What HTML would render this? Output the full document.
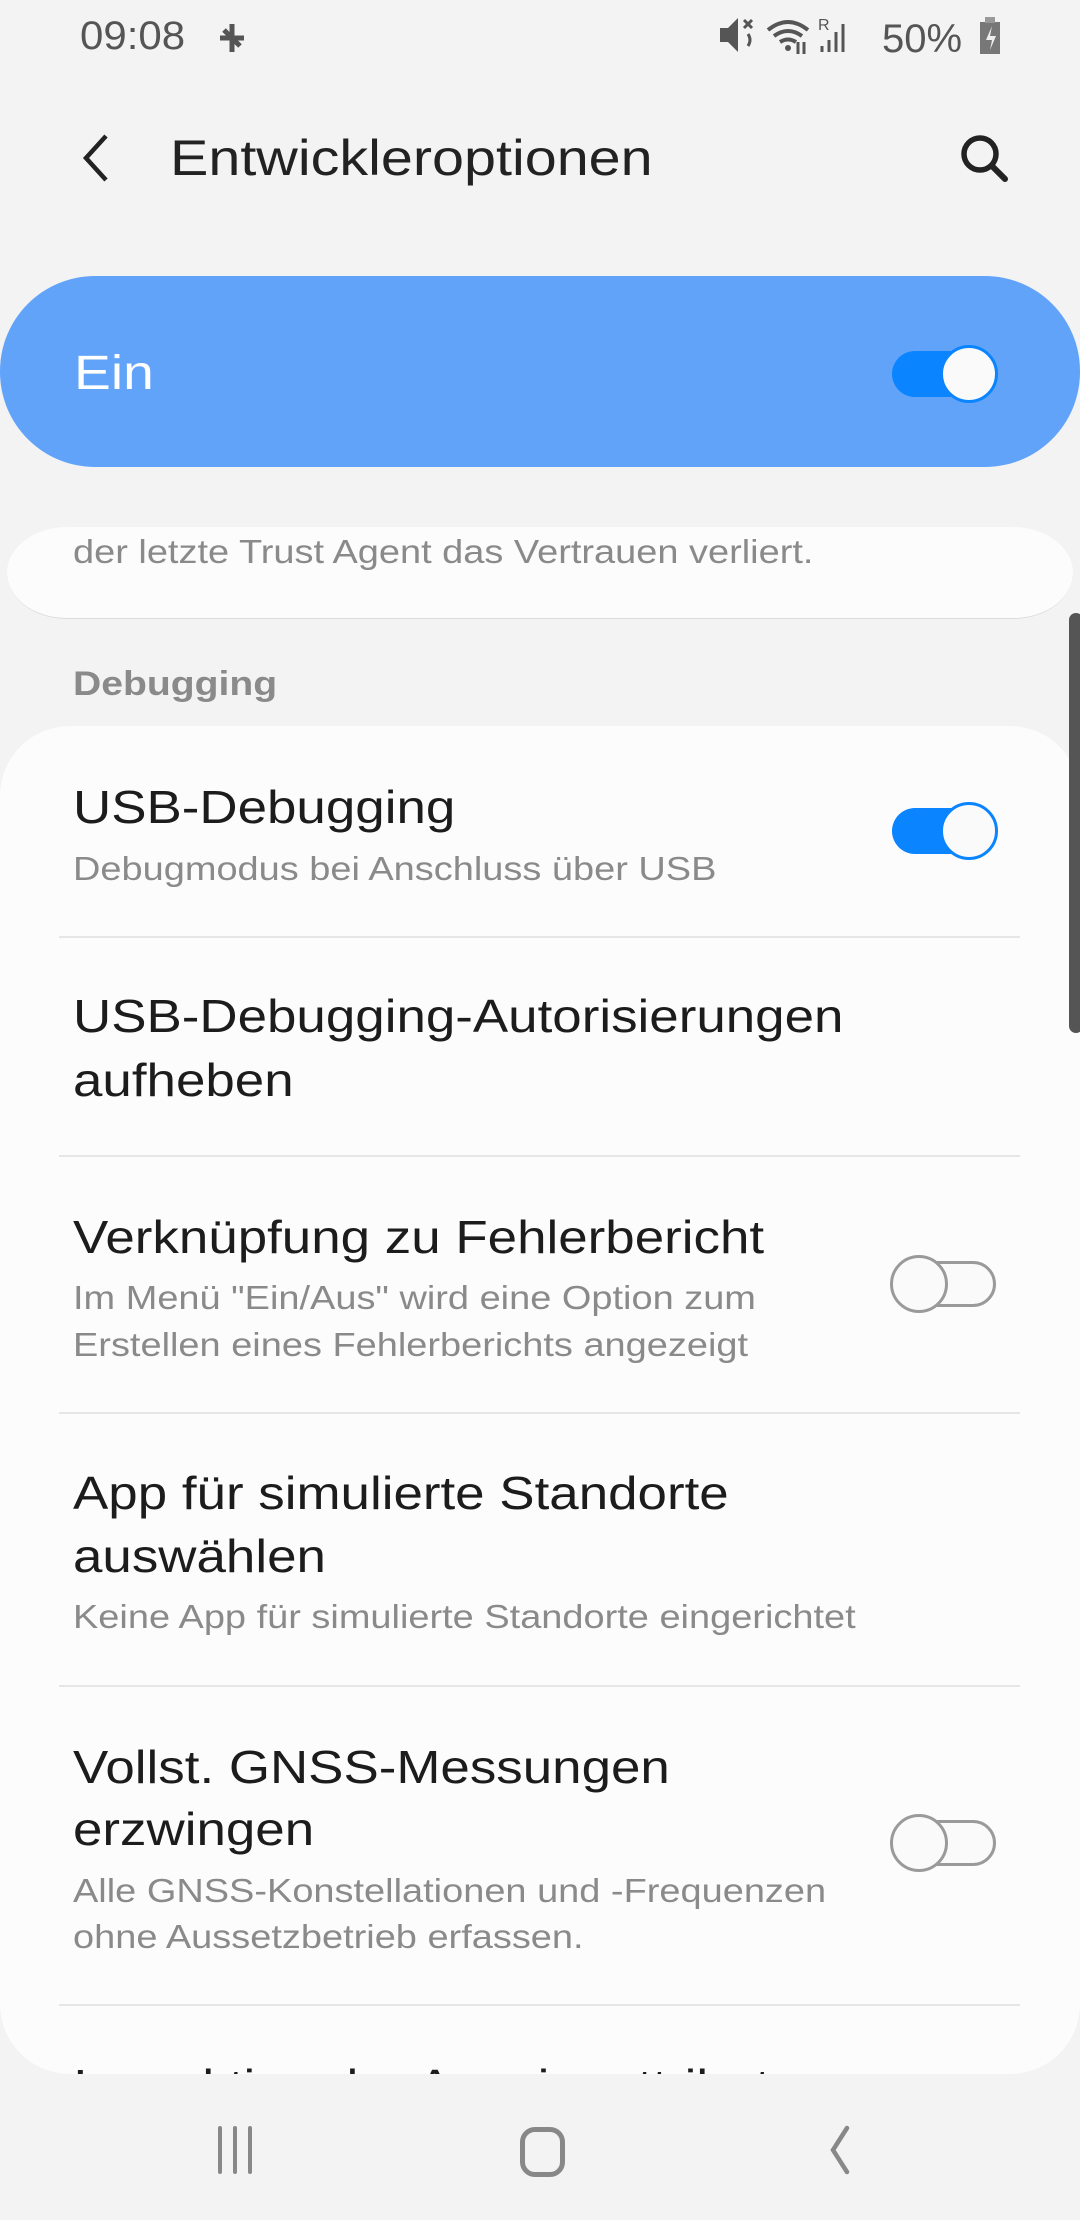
<!DOCTYPE html>
<html><head><meta charset="utf-8"><style>
*{margin:0;padding:0;box-sizing:border-box}
body{width:1080px;height:2220px;background:#f3f3f3;position:relative;overflow:hidden;font-family:"Liberation Sans",sans-serif}
.t{position:absolute;white-space:nowrap;line-height:60px;height:60px;transform:scaleX(1.15);transform-origin:0 50%}
.title{font-size:46px;color:#1c1c1c}
.sub{font-size:33px;color:#8a8a8a}
.div{position:absolute;left:59px;width:961px;height:2px;background:#e6e6e6}
.tog{position:absolute;width:108px;height:56px}
.tog .tr{position:absolute;left:2px;top:5px;width:104px;height:46px;border-radius:23px;background:#0a84ff}
.tog .th{position:absolute;right:0;top:0;width:58px;height:58px;border-radius:50%;background:#fafafa;border:3px solid #0a84ff;top:-1px}
.off .tr{background:#fafafa;border:3px solid #9a9a9a}
.off .th{left:0;right:auto;border-color:#9a9a9a}
</style></head><body>
<div class="t" style="left:80px;top:6px;font-size:40px;color:#555;transform:scaleX(1.05)">09:08</div>
<svg style="position:absolute;left:214px;top:20px" width="36" height="36" viewBox="0 0 36 36"><path d="M18 4v14H6M18 32V18h12M18 18l-8-8M18 18l8 8" stroke="#555" stroke-width="5" fill="none"/></svg>
<svg style="position:absolute;left:718px;top:14px" width="286" height="44" viewBox="0 0 286 44">
<path d="M2 14h8l10-10v34L10 28H2z" fill="#555"/><path d="M26 6l8 8M34 6l-8 8" stroke="#555" stroke-width="3"/><path d="M30 20q4 6 0 12" stroke="#555" stroke-width="3" fill="none"/>
<path d="M50 16q20-16 40 0M56 22q14-10 28 0M62 28q8-5 16 0" stroke="#555" stroke-width="4" fill="none"/><circle cx="70" cy="34" r="3" fill="#555"/><path d="M80 28v12M86 28v12" stroke="#555" stroke-width="3"/>
<text x="100" y="16" font-size="16" fill="#555" font-family="Liberation Sans">R</text>
<path d="M104 38v-6M111 38v-12M118 38v-20M125 38v-28" stroke="#555" stroke-width="3"/>
<text x="164" y="38" font-size="40" fill="#555" font-family="Liberation Sans">50%</text>
<rect x="262" y="8" width="20" height="32" fill="#777"/><rect x="267" y="3" width="10" height="6" fill="#999"/><path d="M274 12l-6 14h6l-2 10 6-14h-6z" fill="#eee"/>
</svg>
<svg style="position:absolute;left:76px;top:132px" width="40" height="52" viewBox="0 0 40 52"><path d="M30 4L10 26l20 22" stroke="#222" stroke-width="4.5" fill="none"/></svg>
<div class="t" style="left:170px;top:128px;font-size:50px;color:#222">Entwickleroptionen</div>
<svg style="position:absolute;left:955px;top:130px" width="60" height="56" viewBox="0 0 60 56"><circle cx="25" cy="24" r="16" stroke="#222" stroke-width="5.5" fill="none"/><path d="M37 36l13 13" stroke="#222" stroke-width="6" stroke-linecap="round"/></svg>
<div style="position:absolute;left:0;top:276px;width:1080px;height:191px;border-radius:95px;background:#62a3fa"></div>
<div class="t" style="left:74px;top:344px;font-size:48px;color:#fff">Ein</div>
<div class="tog" style="left:890px;top:346px"><div class="tr"></div><div class="th"></div></div>
<div style="position:absolute;left:7px;top:527px;width:1066px;height:92px;background:#fcfcfc;border-bottom:1px solid #ddd;border-radius:60px/46px"></div>
<div class="t sub" style="left:73px;top:522px">der letzte Trust Agent das Vertrauen verliert.</div>
<div class="t" style="left:73px;top:654px;font-size:34px;color:#8a8a8a;font-weight:bold">Debugging</div>
<div style="position:absolute;left:0;top:726px;width:1080px;height:1348px;border-radius:70px;background:#fcfcfc;overflow:hidden">
<div class="t title" style="left:73px;top:51px">USB-Debugging</div>
<div class="t sub" style="left:73px;top:113px">Debugmodus bei Anschluss über USB</div>
<div class="div" style="top:210px"></div>
<div class="t title" style="left:73px;top:260px">USB-Debugging-Autorisierungen</div>
<div class="t title" style="left:73px;top:324px">aufheben</div>
<div class="div" style="top:429px"></div>
<div class="t title" style="left:73px;top:481px">Verknüpfung zu Fehlerbericht</div>
<div class="t sub" style="left:73px;top:542px">Im Menü "Ein/Aus" wird eine Option zum</div>
<div class="t sub" style="left:73px;top:589px">Erstellen eines Fehlerberichts angezeigt</div>
<div class="div" style="top:686px"></div>
<div class="t title" style="left:73px;top:737px">App für simulierte Standorte</div>
<div class="t title" style="left:73px;top:800px">auswählen</div>
<div class="t sub" style="left:73px;top:861px">Keine App für simulierte Standorte eingerichtet</div>
<div class="div" style="top:959px"></div>
<div class="t title" style="left:73px;top:1011px">Vollst. GNSS-Messungen</div>
<div class="t title" style="left:73px;top:1073px">erzwingen</div>
<div class="t sub" style="left:73px;top:1135px">Alle GNSS-Konstellationen und -Frequenzen</div>
<div class="t sub" style="left:73px;top:1181px">ohne Aussetzbetrieb erfassen.</div>
<div class="div" style="top:1278px"></div>
<div class="t title" style="left:73px;top:1330px">Inspektion der Anzeigeattribute</div>
</div>
<div class="tog" style="left:890px;top:803px"><div class="tr"></div><div class="th"></div></div>
<div class="tog off" style="left:890px;top:1256px"><div class="tr"></div><div class="th"></div></div>
<div class="tog off" style="left:890px;top:1815px"><div class="tr"></div><div class="th"></div></div>
<div style="position:absolute;left:1069px;top:613px;width:14px;height:420px;border-radius:7px;background:#555"></div>
<svg style="position:absolute;left:210px;top:2124px" width="60" height="56"><path d="M10 4v44M25 4v44M40 4v44" stroke="#888" stroke-width="4" stroke-linecap="round"/></svg>
<div style="position:absolute;left:520px;top:2127px;width:45px;height:50px;border:5px solid #888;border-radius:15px"></div>
<svg style="position:absolute;left:825px;top:2124px" width="40" height="56"><path d="M22 4L8 26l14 22" stroke="#888" stroke-width="4.5" fill="none" stroke-linecap="round"/></svg>
</body></html>
